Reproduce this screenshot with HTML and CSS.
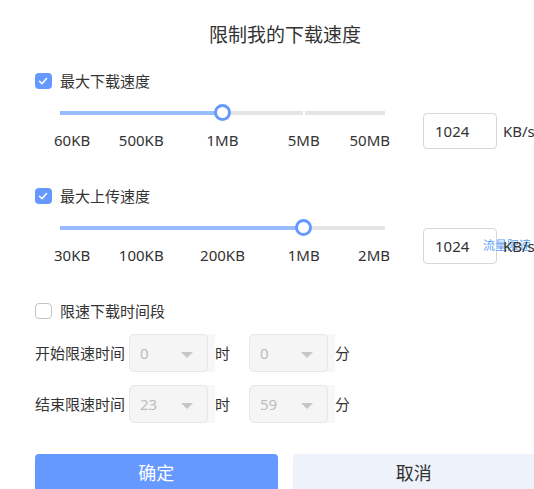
FILE: index.html
```html
<!DOCTYPE html>
<html lang="zh-CN">
<head>
<meta charset="utf-8">
<title>限制我的下载速度</title>
<link rel="stylesheet" href="styles.css">
</head>
<body>
<div class="dialog">
  <h1 class="title">限制我的下载速度</h1>

  <div class="check-row">
    <span class="checkbox checked"><svg viewBox="0 0 16 16" width="16" height="16"><polyline points="4.5,8.3 7,10.8 11.5,5.6" fill="none" stroke="#fff" stroke-width="1.5" stroke-linecap="round" stroke-linejoin="round"/></svg></span>
    <span class="check-label">最大下载速度</span>
  </div>
  <div class="slider-row">
    <div class="slider">
      <div class="track"><div class="fill" style="width:50%"></div><span class="stop" style="left:75%"></span></div>
      <span class="thumb" style="left:50%"></span>
      <span class="tick tick-first">60KB</span>
      <span class="tick tick-mid" style="left:25%">500KB</span>
      <span class="tick tick-mid" style="left:50%">1MB</span>
      <span class="tick tick-mid" style="left:75%">5MB</span>
      <span class="tick tick-last">50MB</span>
    </div>
    <div class="value-box">1024</div>
    <div class="unit"><span class="unit-text">KB/s</span></div>
  </div>

  <div class="check-row section-gap">
    <span class="checkbox checked"><svg viewBox="0 0 16 16" width="16" height="16"><polyline points="4.5,8.3 7,10.8 11.5,5.6" fill="none" stroke="#fff" stroke-width="1.5" stroke-linecap="round" stroke-linejoin="round"/></svg></span>
    <span class="check-label">最大上传速度</span>
  </div>
  <div class="slider-row">
    <div class="slider">
      <div class="track"><div class="fill" style="width:75%"></div></div>
      <span class="thumb" style="left:75%"></span>
      <span class="tick tick-first">30KB</span>
      <span class="tick tick-mid" style="left:25%">100KB</span>
      <span class="tick tick-mid" style="left:50%">200KB</span>
      <span class="tick tick-mid" style="left:75%">1MB</span>
      <span class="tick tick-last">2MB</span>
    </div>
    <div class="value-box">1024</div>
    <div class="unit"><span class="ghost">流量限速</span><span class="unit-text">KB/s</span></div>
  </div>

  <div class="check-row section-gap">
    <span class="checkbox"></span>
    <span class="check-label">限速下载时间段</span>
  </div>
  <div class="time-row first">
    <span class="time-label">开始限速时间</span>
    <div class="select-wrap"><div class="select"><span>0</span><i class="arrow"></i></div></div>
    <span class="time-unit">时</span>
    <div class="select-wrap"><div class="select"><span>0</span><i class="arrow"></i></div></div>
    <span class="time-unit">分</span>
  </div>
  <div class="time-row second">
    <span class="time-label">结束限速时间</span>
    <div class="select-wrap"><div class="select"><span>23</span><i class="arrow"></i></div></div>
    <span class="time-unit">时</span>
    <div class="select-wrap"><div class="select"><span>59</span><i class="arrow"></i></div></div>
    <span class="time-unit">分</span>
  </div>

  <div class="buttons">
    <button class="btn btn-primary">确定</button>
    <button class="btn btn-cancel">取消</button>
  </div>
</div>
</body>
</html>
```

FILE: styles.css
```css
html, body {
  margin: 0;
  padding: 0;
  overflow: hidden;
  background: #fff;
}

.dialog {
  width: 570px;
  box-sizing: border-box;
  padding: 23px 35px 0;
  font-family: "Noto Sans", "Noto Sans CJK SC", sans-serif;
  color: #333;
}

.title {
  margin: 0;
  font-size: 19px;
  font-weight: normal;
  line-height: 24px;
  text-align: center;
  color: #333;
}

.check-row {
  display: flex;
  align-items: center;
  height: 20px;
  margin-top: 24px;
}

.section-gap {
  margin-top: 36px;
}

.checkbox {
  display: flex;
  width: 17px;
  height: 16px;
  box-sizing: border-box;
  border: 1px solid #c4c4c4;
  border-radius: 4px;
  background: #fff;
}

.checkbox.checked {
  border: none;
  background: #6699ff;
}

.check-label {
  margin-left: 8px;
  font-size: 15px;
  line-height: 20px;
}

.slider-row {
  display: flex;
  align-items: flex-start;
  margin-top: 13px;
  height: 46px;
}

.slider {
  position: relative;
  margin-left: 25px;
  width: 325px;
  height: 46px;
  flex: none;
}

.track {
  position: absolute;
  top: 7px;
  left: 0;
  right: 0;
  height: 4px;
  background: #e5e5e5;
}

.fill {
  height: 100%;
  background: #99bbff;
}

.stop {
  position: absolute;
  top: 0;
  width: 2px;
  height: 4px;
  margin-left: -1px;
  background: #fff;
}

.thumb {
  position: absolute;
  top: 0;
  width: 17px;
  height: 17px;
  margin-left: -8.5px;
  box-sizing: border-box;
  border: 3px solid #6699ff;
  border-radius: 50%;
  background: #fff;
}

.tick {
  position: absolute;
  top: 26px;
  font-size: 15px;
  line-height: 20px;
  white-space: nowrap;
  color: #333;
}

.tick-first {
  left: -6px;
}

.tick-mid {
  transform: translateX(-50%);
}

.tick-last {
  right: -5px;
}

.value-box {
  flex: none;
  margin-left: 38px;
  margin-top: 9px;
  width: 74px;
  height: 36px;
  box-sizing: border-box;
  border: 1px solid #d6d6d6;
  border-radius: 4px;
  padding-left: 11px;
  font-size: 15px;
  line-height: 34px;
  color: #333;
}

.unit {
  position: relative;
  margin-left: 6px;
  margin-top: 9px;
  font-size: 15px;
  line-height: 36px;
  white-space: nowrap;
}

.unit-text {
  position: relative;
  z-index: 1;
}

.ghost {
  position: absolute;
  left: -20px;
  top: 0;
  font-size: 12px;
  line-height: 36px;
  color: #5b9ff0;
  white-space: nowrap;
}

.time-row {
  display: flex;
  align-items: center;
  height: 38px;
}

.time-row.first {
  margin-top: 13px;
}

.time-row.second {
  margin-top: 13px;
}

.time-label {
  width: 94px;
  font-size: 15px;
  line-height: 20px;
}

.select-wrap {
  display: flex;
  width: 86px;
  height: 38px;
  background: linear-gradient(to right, transparent 76px, #f7f7f7 76px);
}

.select {
  display: flex;
  align-items: center;
  justify-content: space-between;
  width: 79px;
  height: 38px;
  box-sizing: border-box;
  padding: 0 14px 0 10px;
  border: 1px solid #e6e6e6;
  border-radius: 5px;
  background: #f5f5f5;
  font-size: 15px;
  color: #bdbdbd;
}

.arrow {
  display: block;
  width: 0;
  height: 0;
  margin-top: 3px;
  border-left: 6px solid transparent;
  border-right: 6px solid transparent;
  border-top: 6px solid #c6c6c6;
}

.time-unit {
  width: 34px;
  font-size: 15px;
  line-height: 20px;
}

.buttons {
  display: flex;
  gap: 15px;
  margin-top: 31px;
}

.btn {
  flex: 1;
  height: 38px;
  border: none;
  border-radius: 4px;
  font-family: "Noto Sans", "Noto Sans CJK SC", sans-serif;
  font-size: 18px;
  line-height: 38px;
  padding: 0;
}

.btn-primary {
  background: #6699ff;
  color: #fff;
}

.btn-cancel {
  background: #eef2fa;
  color: #333;
}
```
